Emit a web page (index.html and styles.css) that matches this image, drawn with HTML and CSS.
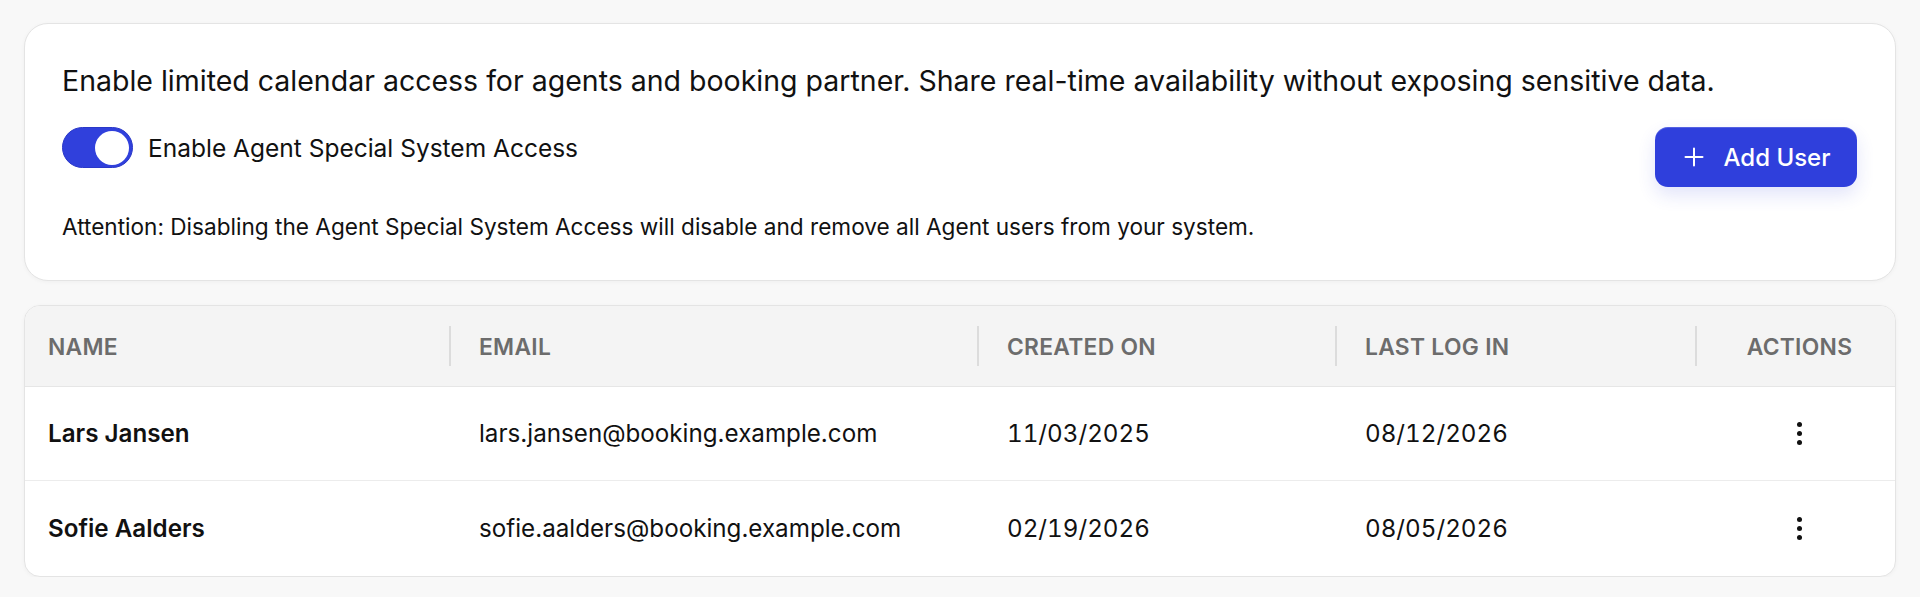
FILE: index.html
```html
<!DOCTYPE html>
<html lang="en">
<head>
<meta charset="utf-8">
<title>Agent Access</title>
<link rel="stylesheet" href="styles.css">
</head>
<body>
<main class="page">
  <section class="card settings">
    <p class="intro">Enable limited calendar access for agents and booking partner. Share real-time availability without exposing sensitive data.</p>
    <div class="settings-row">
      <div class="settings-left">
        <label class="toggle-row">
          <span class="toggle"><span class="knob"></span></span>
          <span class="toggle-label">Enable Agent Special System Access</span>
        </label>
        <p class="attention">Attention: Disabling the Agent Special System Access will disable and remove all Agent users from your system.</p>
      </div>
      <button class="btn-primary" type="button">
        <svg class="plus" viewBox="0 0 20 20" width="20" height="20" aria-hidden="true"><path d="M10 1.5v17M1.5 10h17" stroke="currentColor" stroke-width="2" stroke-linecap="round" fill="none"/></svg>
        <span>Add User</span>
      </button>
    </div>
  </section>

  <section class="card table-card">
    <div class="trow thead">
      <div class="cell c-name">Name</div>
      <div class="cell c-email sep">Email</div>
      <div class="cell c-created sep">Created On</div>
      <div class="cell c-last sep">Last Log In</div>
      <div class="cell c-actions head-actions sep">Actions</div>
    </div>
    <div class="trow tbody-row">
      <div class="cell c-name strong">Lars Jansen</div>
      <div class="cell c-email">lars.jansen@booking.example.com</div>
      <div class="cell c-created num">11/03/2025</div>
      <div class="cell c-last num">08/12/2026</div>
      <div class="cell c-actions"><span class="dots"><i></i><i></i><i></i></span></div>
    </div>
    <div class="trow tbody-row last">
      <div class="cell c-name strong">Sofie Aalders</div>
      <div class="cell c-email">sofie.aalders@booking.example.com</div>
      <div class="cell c-created num">02/19/2026</div>
      <div class="cell c-last num">08/05/2026</div>
      <div class="cell c-actions"><span class="dots"><i></i><i></i><i></i></span></div>
    </div>
  </section>
</main>
</body>
</html>
```

FILE: styles.css
```css
* { box-sizing: border-box; }
html, body { margin: 0; padding: 0; }
body {
  background: #f8f8f8;
  font-family: Inter, "Noto Sans", "Liberation Sans", sans-serif;
  color: #111111;
}
.page {
  padding: 23px 24px 0 24px;
  display: flex;
  flex-direction: column;
  gap: 24px;
}
.card {
  background: #ffffff;
  border: 1px solid #e4e4e4;
  box-shadow: 0 1px 4px rgba(0,0,0,0.04);
}
.settings {
  border-radius: 24px;
  padding: 40px 37px 40px 37px;
}
.intro {
  margin: 0;
  font-size: 28.5px;
  line-height: 34px;
  color: #111;
}
.settings-row {
  margin-top: 29px;
  display: flex;
  justify-content: space-between;
  align-items: flex-start;
}
.toggle-row {
  display: flex;
  align-items: center;
  gap: 15px;
}
.toggle {
  width: 71px;
  height: 41px;
  border-radius: 21px;
  background: #3040dc;
  border: 1px solid #2a38c8;
  position: relative;
  flex: none;
}
.knob {
  position: absolute;
  right: 3px;
  top: 3px;
  width: 34px;
  height: 34px;
  border-radius: 50%;
  background: #ffffff;
}
.toggle-label {
  font-size: 24.5px;
  line-height: 28px;
  color: #111;
}
.attention {
  margin: 45px 0 0 0;
  font-size: 22.6px;
  line-height: 27px;
  color: #111;
}
.btn-primary {
  margin-right: 1px;
  width: 202px;
  height: 60px;
  border: none;
  border-radius: 13px;
  background: #2f3fdc;
  color: #ffffff;
  font-family: inherit;
  font-size: 24px;
  font-weight: 500;
  display: flex;
  align-items: center;
  justify-content: center;
  gap: 20px;
  box-shadow: inset 0 1px 0 rgba(255,255,255,0.18), 0 8px 18px rgba(47,63,220,0.14);
  padding: 0 0 0 2px;
}
.plus { flex: none; }

.table-card {
  border-radius: 16px;
  overflow: hidden;
}
.trow {
  display: grid;
  grid-template-columns: 424px 528px 358px 360px 1fr;
  align-items: center;
}
.thead {
  height: 81px;
  background: #f4f4f4;
  border-bottom: 1px solid #e6e6e6;
  color: #6c6c6c;
  font-size: 22.8px;
  font-weight: 600;
  text-transform: uppercase;
  letter-spacing: 0.3px;
}
.tbody-row {
  height: 94px;
  border-bottom: 1px solid #ececec;
  font-size: 24.2px;
}
.tbody-row.last { border-bottom: none; height: 95px; }
.cell {
  padding-left: 30px;
  position: relative;
  white-space: nowrap;
}
.c-name { padding-left: 23px; }
.strong { font-weight: 600; }
.num { font-variant-numeric: tabular-nums; }
.sep::before {
  content: "";
  position: absolute;
  left: 0;
  top: 50%;
  width: 2px;
  height: 40px;
  margin-top: -20px;
  background: #dcdcdc;
}
.c-actions {
  padding-left: 0;
  padding-right: 0;
  display: flex;
  justify-content: center;
}
.head-actions { padding-left: 9px; }
.dots {
  display: flex;
  flex-direction: column;
  gap: 4px;
  margin-left: 8px;
}
.dots i {
  display: block;
  width: 5px;
  height: 5px;
  border-radius: 50%;
  background: #111;
}
```
